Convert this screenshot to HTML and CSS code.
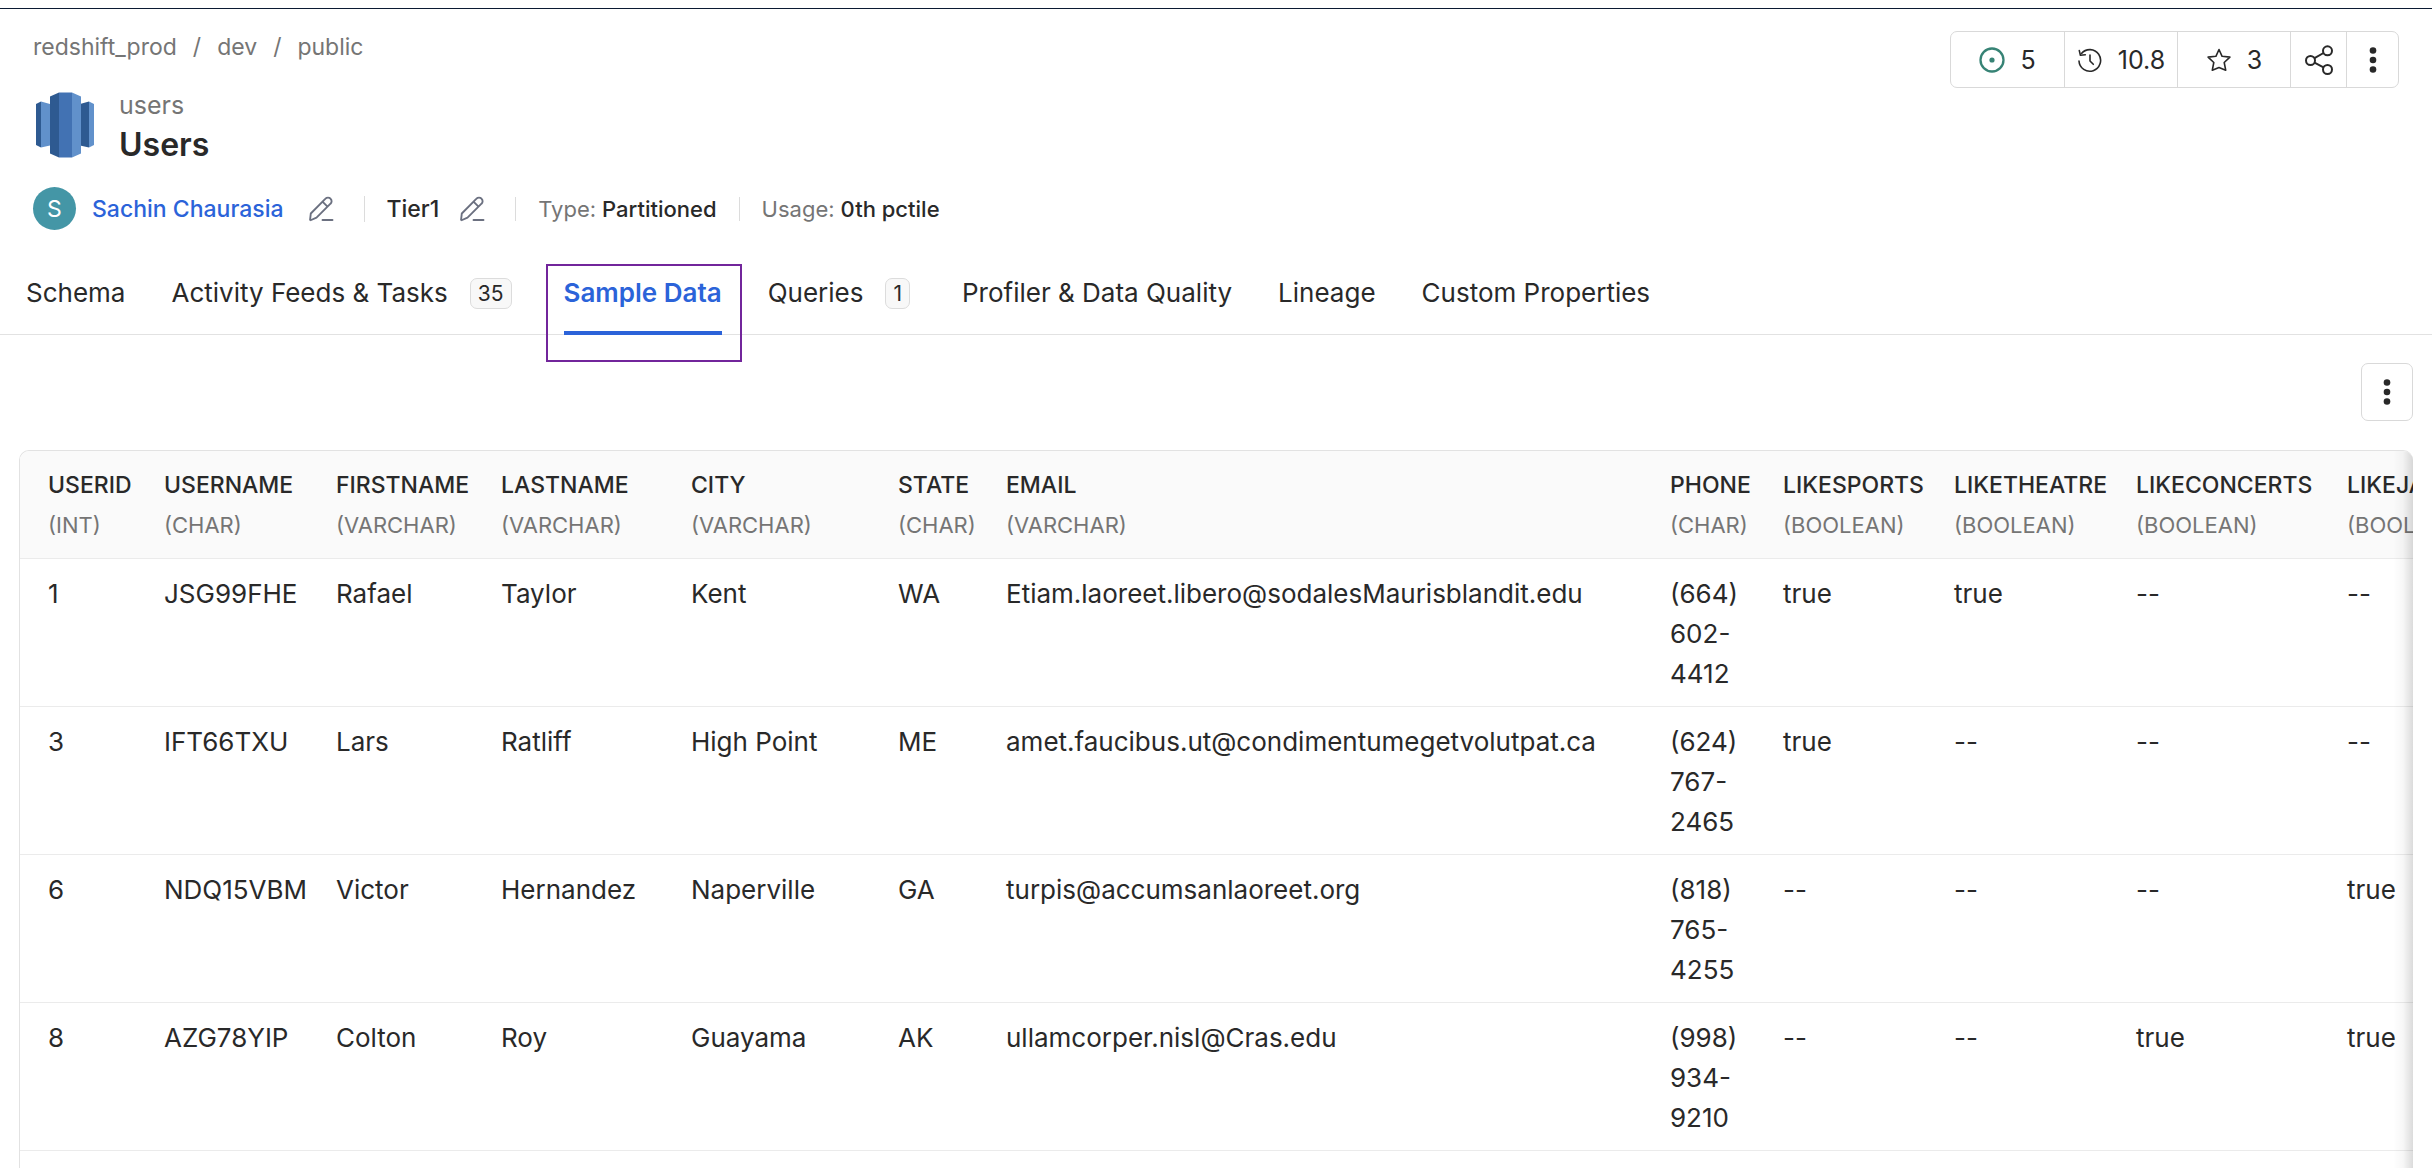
FILE: index.html
```html
<!DOCTYPE html>
<html lang="en">
<head>
<meta charset="utf-8">
<title>Users - Sample Data</title>
<meta name="viewport" content="width=device-width, initial-scale=1">
<link rel="stylesheet" href="styles.css">
</head>
<body>
<svg class="sprite" aria-hidden="true">
  <symbol id="pencil" viewBox="0 0 26 26">
    <path d="M2 24.500 2.800 17.500 17.500 2.700a3.400 3.400 0 0 1 5 0 3.400 3.400 0 0 1 0 5L8.500 21.700 2 24.500M14.500 5.700l5 5" fill="none" stroke="currentColor" stroke-width="1.900" stroke-linejoin="round"/>
    <path d="M14.500 24h10" stroke="currentColor" stroke-width="1.900" stroke-linecap="round"/>
  </symbol>
  <symbol id="dots" viewBox="0 0 8 28">
    <circle cx="4" cy="4.500" r="3.300" fill="currentColor"/><circle cx="4" cy="14" r="3.300" fill="currentColor"/><circle cx="4" cy="23.500" r="3.300" fill="currentColor"/>
  </symbol>
</svg>
<div class="page">
  <div class="top-line"></div>
  <header class="header">
    <div class="summary">
      <nav class="breadcrumb" aria-label="Breadcrumb">
        <a href="#">redshift_prod</a><span>/</span><a href="#">dev</a><span>/</span><a href="#">public</a>
      </nav>
      <div class="entity">
        <svg class="logo" viewBox="0 0 60 66" aria-hidden="true">
          <path d="M1 12 6 9.500v46L1 53z" fill="#2e5a91"/>
          <path d="M6 9.500 15 12v41.500L6 55.500z" fill="#6191cb"/>
          <path d="M59 12 54 9.500v46l5-2.500z" fill="#6191cb"/>
          <path d="M54 9.500 45 12v41.500l9 2z" fill="#2e5a91"/>
          <path d="M15 4.500 24 .5v65l-9-4z" fill="#2e5a91"/>
          <path d="M24 .5h13v65H24z" fill="#4272b3"/>
          <path d="M37 .5l9 4v57l-9 4z" fill="#6191cb"/>
        </svg>
        <div>
          <div class="entity-name">users</div>
          <h1 class="entity-title">Users</h1>
        </div>
      </div>
      <div class="meta">
        <div class="meta-item owner">
          <span class="avatar">S</span>
          <a class="owner-link" href="#">Sachin Chaurasia</a>
          <button class="edit" aria-label="Edit owner"><svg><use href="#pencil"/></svg></button>
        </div>
        <div class="meta-item tier">
          <span class="strong">Tier1</span>
          <button class="edit" aria-label="Edit tier"><svg><use href="#pencil"/></svg></button>
        </div>
        <div class="meta-item"><span class="label">Type:</span><span class="strong">Partitioned</span></div>
        <div class="meta-item"><span class="label">Usage:</span><span class="strong">0th pctile</span></div>
      </div>
    </div>
    <div class="actions">
      <button class="action action-count">
        <svg class="icon tasks" viewBox="0 0 26 26"><circle cx="13" cy="13" r="11.500" fill="none" stroke="currentColor" stroke-width="2.300"/><circle cx="13" cy="13" r="2.600" fill="currentColor"/></svg>5
      </button>
      <button class="action action-count">
        <svg class="icon" viewBox="0 0 26 26" fill="none" stroke="currentColor" stroke-width="1.600" stroke-linecap="round" stroke-linejoin="round"><path d="M4.500 6.500A10.800 10.800 0 1 1 2 14"/><path d="M2.300 3.600 3.400 8.300 8.300 7.800"/><path d="M13 8v6l3.300 3.300"/></svg>10.8
      </button>
      <button class="action action-count">
        <svg class="icon" viewBox="0 0 26 26" fill="none" stroke="currentColor" stroke-width="1.600" stroke-linejoin="round"><path d="M13 2.500 16.100 9.300 23.900 10.100 18.200 15.500 19.700 23.200 13 20.500 6.300 23.200 7.800 15.500 2.100 10.100 9.900 9.300z"/></svg>3
      </button>
      <button class="action action-share" aria-label="Share">
        <svg class="share" viewBox="0 0 30 30" fill="none" stroke="currentColor" stroke-width="2"><circle cx="6.500" cy="15.500" r="4.500"/><circle cx="23.500" cy="5.800" r="4.500"/><circle cx="23.500" cy="24.500" r="4.500"/><path d="M10.500 13.200 19.500 8M10.500 17.700 19.500 22.300"/></svg>
      </button>
      <button class="action action-more" aria-label="More actions"><svg class="dots"><use href="#dots"/></svg></button>
    </div>
  </header>

  <div class="tabs" role="tablist">
    <button class="tab" role="tab">Schema</button>
    <button class="tab" role="tab">Activity Feeds &amp; Tasks<span class="badge">35</span></button>
    <button class="tab active" role="tab" aria-selected="true">Sample Data</button>
    <button class="tab" role="tab">Queries<span class="badge">1</span></button>
    <button class="tab" role="tab">Profiler &amp; Data Quality</button>
    <button class="tab" role="tab">Lineage</button>
    <button class="tab" role="tab">Custom Properties</button>
  </div>

  <main class="content">
    <button class="menu-button" aria-label="Sample data options"><svg class="dots"><use href="#dots"/></svg></button>
    <div class="table-frame">
      <div class="table-scroll">
        <table class="data">
          <colgroup>
            <col class="c-id"><col class="c-username"><col class="c-first"><col class="c-last"><col class="c-city"><col class="c-state"><col class="c-email"><col class="c-phone"><col class="c-sports"><col class="c-theatre"><col class="c-concerts"><col class="c-jazz">
          </colgroup>
          <thead>
            <tr>
              <th>USERID<span>(INT)</span></th>
              <th>USERNAME<span>(CHAR)</span></th>
              <th>FIRSTNAME<span>(VARCHAR)</span></th>
              <th>LASTNAME<span>(VARCHAR)</span></th>
              <th>CITY<span>(VARCHAR)</span></th>
              <th>STATE<span>(CHAR)</span></th>
              <th>EMAIL<span>(VARCHAR)</span></th>
              <th>PHONE<span>(CHAR)</span></th>
              <th>LIKESPORTS<span>(BOOLEAN)</span></th>
              <th>LIKETHEATRE<span>(BOOLEAN)</span></th>
              <th>LIKECONCERTS<span>(BOOLEAN)</span></th>
              <th>LIKEJAZZ<span>(BOOLEAN)</span></th>
            </tr>
          </thead>
          <tbody>
            <tr><td>1</td><td>JSG99FHE</td><td>Rafael</td><td>Taylor</td><td>Kent</td><td>WA</td><td>Etiam.laoreet.libero@sodalesMaurisblandit.edu</td><td>(664) 602-4412</td><td>true</td><td>true</td><td>--</td><td>--</td></tr>
            <tr><td>3</td><td>IFT66TXU</td><td>Lars</td><td>Ratliff</td><td>High Point</td><td>ME</td><td>amet.faucibus.ut@condimentumegetvolutpat.ca</td><td>(624) 767-2465</td><td>true</td><td>--</td><td>--</td><td>--</td></tr>
            <tr><td>6</td><td>NDQ15VBM</td><td>Victor</td><td>Hernandez</td><td>Naperville</td><td>GA</td><td>turpis@accumsanlaoreet.org</td><td>(818) 765-4255</td><td>--</td><td>--</td><td>--</td><td>true</td></tr>
            <tr><td>8</td><td>AZG78YIP</td><td>Colton</td><td>Roy</td><td>Guayama</td><td>AK</td><td>ullamcorper.nisl@Cras.edu</td><td>(998) 934-9210</td><td>--</td><td>--</td><td>true</td><td>true</td></tr>
          </tbody>
        </table>
      </div>
    </div>
  </main>
</div>
</body>
</html>
```
FILE: styles.css
```css
* { box-sizing: border-box; }

body {
  margin: 0;
  background: #fff;
  color: #292929;
  font-family: Inter, "Liberation Sans", sans-serif;
  font-size: 25px;
  line-height: 40px;
}

button {
  margin: 0;
  padding: 0;
  border: 0;
  background: none;
  color: inherit;
  font: inherit;
  cursor: pointer;
}

a { color: inherit; text-decoration: none; }
svg { display: block; flex: none; }
.sprite { position: absolute; width: 0; height: 0; }

.page {
  display: flex;
  flex-direction: column;
  height: 100vh;
  overflow: hidden;
}

.top-line {
  flex: none;
  height: 9px;
  border-bottom: 1px solid #0b1a33;
}

/* Header */
.header {
  display: flex;
  justify-content: space-between;
  align-items: flex-start;
  padding: 22px 33px 26px;
}

.summary { display: flex; flex-direction: column; gap: 22px; }

.breadcrumb {
  display: flex;
  gap: 16px;
  color: #757575;
  font-size: 23px;
  line-height: 32px;
}

.entity { display: flex; align-items: center; gap: 24px; }
.logo { width: 60px; height: 66px; margin-left: 2px; }
.entity-name { color: #757575; }
.entity-title { margin: 0; font-size: 32px; font-weight: 600; line-height: 40px; }

.meta { display: flex; align-items: center; height: 43px; font-size: 22px; }
.meta-item { display: flex; align-items: center; gap: 6px; line-height: 24px; }
.meta-item + .meta-item {
  margin-left: 22px;
  padding-left: 22px;
  border-left: 1px solid #dcdcdc;
}
.owner, .tier { font-size: 23px; }
.owner { gap: 16px; }
.tier { gap: 20px; }
.meta-item.owner + .tier { margin-left: 30px; }
.tier + .meta-item.meta-item { margin-left: 30px; }
.avatar {
  display: grid;
  place-items: center;
  width: 43px;
  height: 43px;
  border-radius: 50%;
  background: #4496a6;
  color: #fff;
}
.owner-link { color: #2b63d9; font-weight: 500; }
.owner .edit { margin-left: 8px; }
.strong { font-weight: 500; }
.label { color: #757575; }
.edit { color: #6b7080; }
.edit svg { width: 26px; height: 26px; }

.actions {
  display: flex;
  height: 57px;
  border: 1px solid #d9d9d9;
  border-radius: 7px;
}
.action { display: flex; align-items: center; justify-content: center; }
.action + .action { border-left: 1px solid #d9d9d9; }
.action-count { gap: 15px; width: 113px; }
.action-share { width: 56px; }
.action-more { width: 52px; }
.icon { width: 26px; height: 26px; }
.tasks { color: #378375; }
.share { width: 30px; height: 30px; }
.dots { width: 8px; height: 28px; }

/* Tabs */
.tabs {
  display: flex;
  flex: none;
  gap: 46px;
  padding-left: 26px;
  box-shadow: inset 0 -1px #e2e2e2;
  font-size: 26px;
}
.tab {
  position: relative;
  display: flex;
  align-items: center;
  gap: 22px;
  padding: 17px 0 22px;
  white-space: nowrap;
}
.tab.active { color: #2b63d9; font-weight: 600; }
.tab.active::before {
  content: "";
  position: absolute;
  inset: 8px -20px -27px -18px;
  border: 2px solid #72259b;
}
.tab.active::after {
  content: "";
  position: absolute;
  inset: auto 0 0;
  height: 4px;
  background: #2b63d9;
}
.badge {
  margin-right: 6px;
  padding: 0 7px;
  border: 1px solid #dcdcdc;
  border-radius: 7px;
  background: #f8f8f8;
  font-size: 21px;
  line-height: 29px;
}

/* Sample data */
.content {
  display: flex;
  flex: 1;
  flex-direction: column;
  min-height: 0;
  padding: 28px 19px 0;
}
.menu-button {
  display: grid;
  place-items: center;
  flex: none;
  align-self: flex-end;
  width: 52px;
  height: 58px;
  margin-bottom: 29px;
  border: 1px solid #d9d9d9;
  border-radius: 7px;
}
.table-frame {
  position: relative;
  flex: 1;
  min-height: 0;
  overflow: hidden;
  border: 1px solid #e2e2e2;
  border-width: 1px 0 0 1px;
  border-radius: 10px 10px 0 0;
}
.table-frame::after {
  content: "";
  position: absolute;
  inset: 0 0 0 auto;
  width: 20px;
  background: linear-gradient(to right, rgba(0, 0, 0, 0), rgba(0, 0, 0, 0.03) 50%, rgba(0, 0, 0, 0.14));
  pointer-events: none;
}
.table-scroll { height: 100%; overflow: hidden; }

.data {
  width: 2490px;
  border-collapse: separate;
  border-spacing: 0;
  table-layout: fixed;
}
.data th, .data td {
  padding: 15px 14px 12px;
  border-bottom: 1px solid #ebebeb;
  text-align: left;
  vertical-align: top;
}
.data td { font-size: 26px; }
.data th:first-child, .data td:first-child { padding-left: 28px; }
.data th {
  padding: 14px 14px 13px;
  background: #fafafa;
  font-size: 23px;
  font-weight: 500;
  white-space: nowrap;
}
.data th span {
  display: block;
  color: #757575;
  font-size: 22px;
  font-weight: 400;
}
.c-id { width: 130px; }
.c-username { width: 172px; }
.c-first { width: 165px; }
.c-last { width: 190px; }
.c-city { width: 207px; }
.c-state { width: 108px; }
.c-email { width: 664px; }
.c-phone { width: 113px; }
.c-sports { width: 171px; }
.c-theatre { width: 182px; }
.c-concerts { width: 211px; }
```
